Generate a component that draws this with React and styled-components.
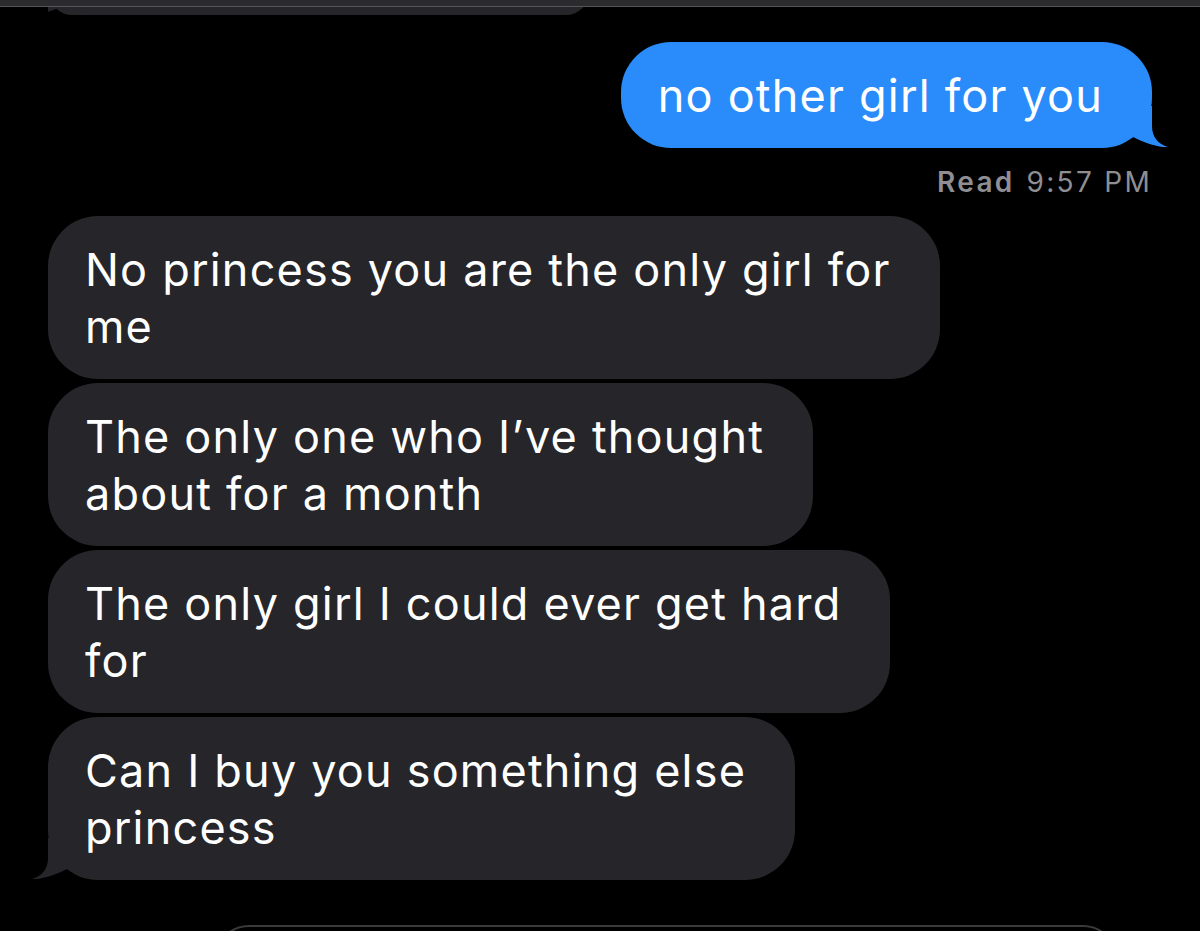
import React from "react";
import styled, { createGlobalStyle } from "styled-components";

const GlobalStyle = createGlobalStyle`
    html, body {
        margin: 0;
        padding: 0;
        background: #000;
    }
    body {
        font-family: Inter, "Noto Sans", sans-serif;
        -webkit-font-smoothing: antialiased;
    }
`;

const colors = {
    sent: "#2a8bfb",
    received: "#262529",
    meta: "#8e8e93",
};

const Screen = styled.div`
    position: relative;
    height: 931px;
    overflow: hidden;
    background: #000;
`;

const StatusStrip = styled.div`
    position: absolute;
    top: 0;
    left: 0;
    right: 0;
    height: 6px;
    background: #2b2b2e;
    border-bottom: 1px solid #55555a;
    z-index: 2;
`;

const Thread = styled.div`
    display: flex;
    flex-direction: column;
    padding: 0 48px;
`;

const TopClip = styled.div`
    height: 15px;
    overflow: hidden;
    display: flex;
    align-items: flex-end;
`;

const Row = styled.div`
    display: flex;
    justify-content: ${props => (props.mine ? "flex-end" : "flex-start")};
    margin-top: ${props => props.gap || 0}px;
`;

const Bubble = styled.div`
    position: relative;
    box-sizing: border-box;
    width: ${props => (props.width ? `${props.width}px` : "auto")};
    padding: 25px 49px 24px 37px;
    border-radius: 50px;
    background: ${props => (props.mine ? colors.sent : colors.received)};
    color: #fff;
    font-size: 45px;
    line-height: 57px;
    letter-spacing: 1.2px;
`;

const Line = styled.span`
    display: block;
    white-space: nowrap;
`;

const TailSvg = styled.svg`
    position: absolute;
    bottom: 0;
    width: 53px;
    height: 42px;
    ${props => (props.mine ? "right: -16px;" : "left: -16px; transform: scaleX(-1);")}
`;

const Receipt = styled.div`
    display: flex;
    justify-content: flex-end;
    gap: 12px;
    margin-top: 18px;
    color: ${colors.meta};
    font-size: 28px;
    line-height: 32px;
    letter-spacing: 2.3px;
`;

const ReceiptLabel = styled.span`
    font-weight: 600;
`;

const Compose = styled.div`
    box-sizing: border-box;
    margin: 45px 82px 0 214px;
    height: 70px;
    border: 2px solid #3a3a3c;
    border-radius: 44px;
`;

const Tail = ({ mine }) => (
    <TailSvg mine={mine} viewBox="0 0 53 42">
        <path
            d="M37 0 L37 20 C37 31 43 38 53 41 C45 41.5 31 38 18 31 L0 36 L0 0 Z"
            fill={mine ? colors.sent : colors.received}
        />
    </TailSvg>
);

const Message = ({ mine, lines, gap, tail, width }) => (
    <Row mine={mine} gap={gap}>
        <Bubble mine={mine} width={width}>
            {lines.map(l => (
                <Line key={l}>{l}</Line>
            ))}
            {tail && <Tail mine={mine} />}
        </Bubble>
    </Row>
);

const received = [
    ["No princess you are the only girl for", "me"],
    ["The only one who I\u2019ve thought", "about for a month"],
    ["The only girl I could ever get hard", "for"],
    ["Can I buy you something else", "princess"],
];

export default function App() {
    return (
        <Screen>
            <GlobalStyle />
            <StatusStrip />
            <Thread>
                <TopClip>
                    <Message lines={["", ""]} width={542} tail />
                </TopClip>
                <Message mine gap={27} lines={["no other girl for you"]} tail />
                <Receipt>
                    <ReceiptLabel>Read</ReceiptLabel>
                    <span>9:57 PM</span>
                </Receipt>
                {received.map((lines, i) => (
                    <Message
                        key={i}
                        lines={lines}
                        gap={i === 0 ? 18 : 4}
                        tail={i === received.length - 1}
                    />
                ))}
            </Thread>
            <Compose />
        </Screen>
    );
}
